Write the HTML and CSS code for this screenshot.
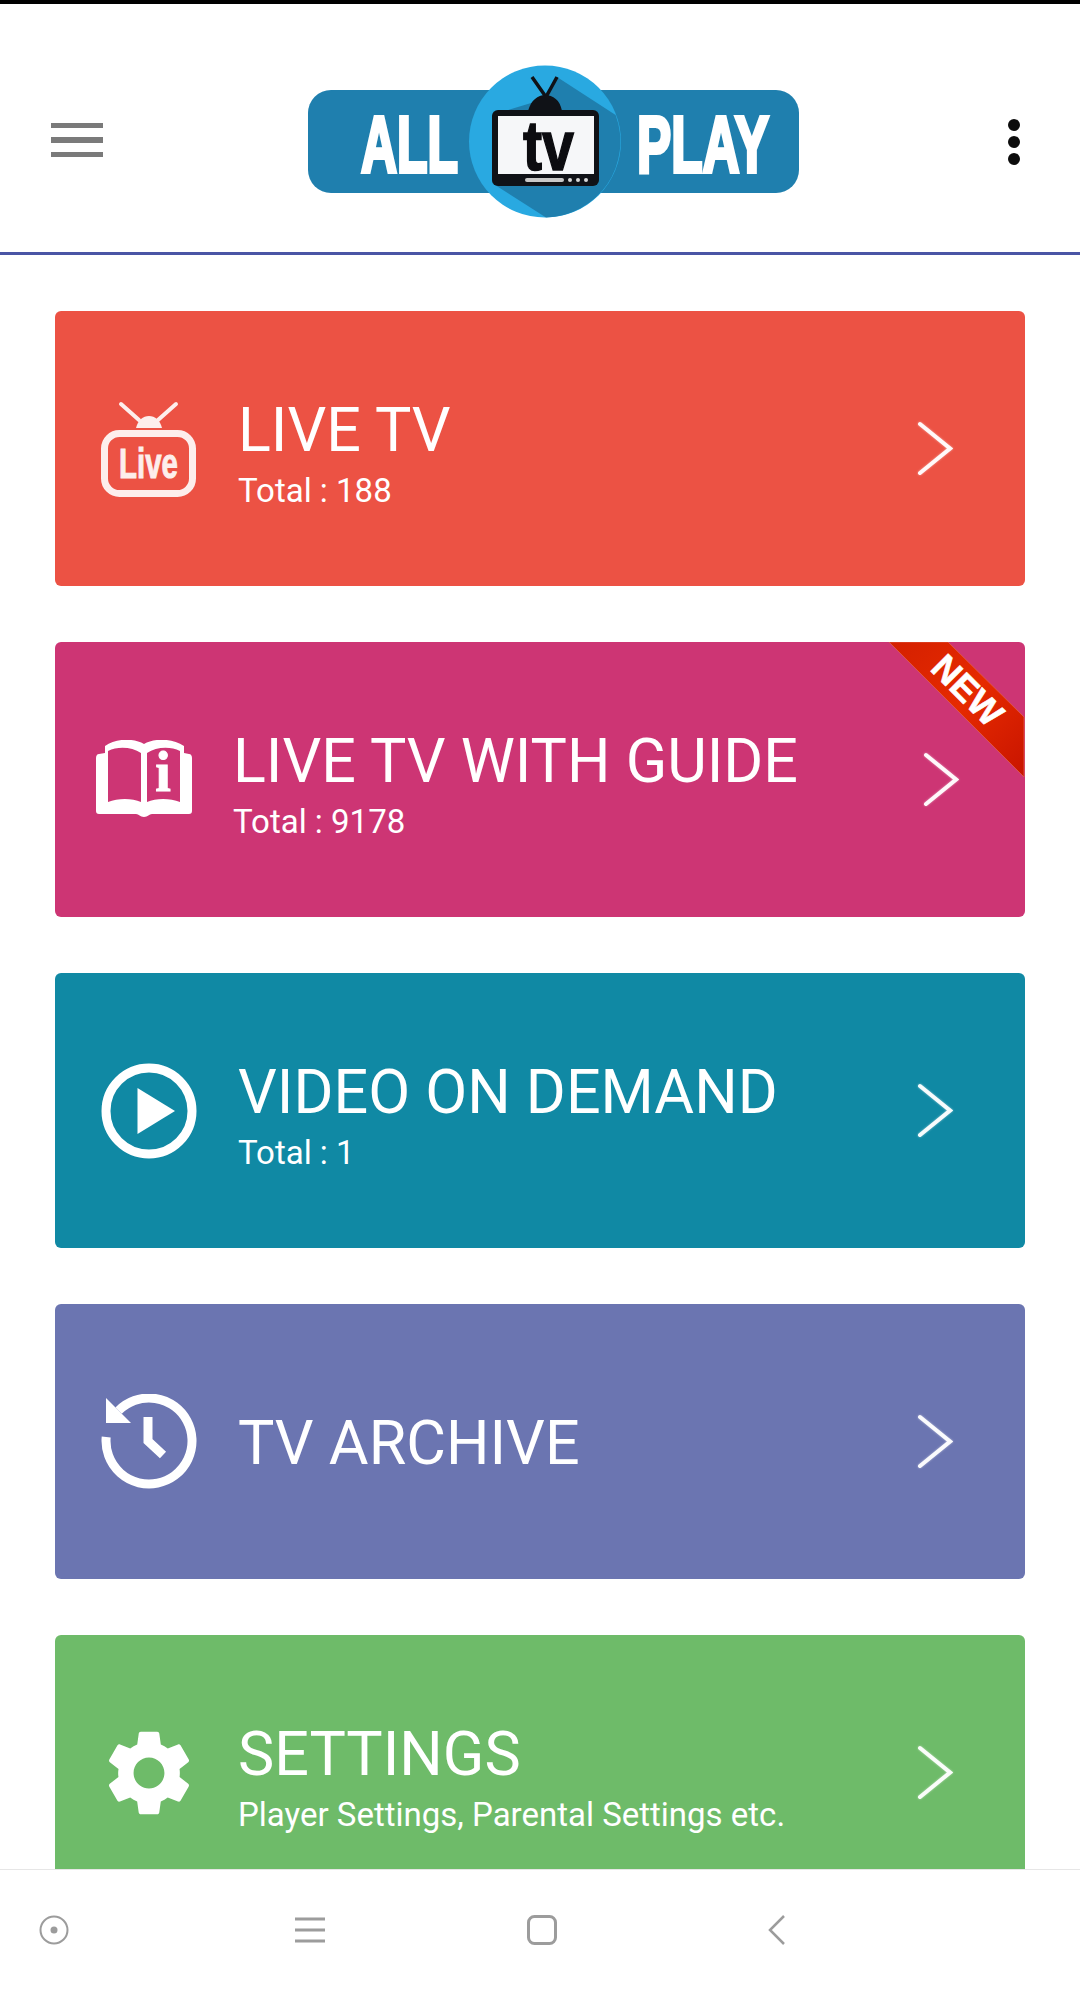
FILE: index.html
```html
<!DOCTYPE html>
<html lang="en">
<head>
  <meta charset="UTF-8" />
  <meta name="viewport" content="width=device-width, initial-scale=1.0" />
  <title>All TV Play</title>
  <link rel="stylesheet" href="styles.css">
</head>
<body>
  <div class="screen">
    <header class="topbar">
      <div class="burger"><span></span><span></span><span></span></div>

      <svg class="logo" viewBox="300 60 510 180">
        <rect x="307" y="90" width="491" height="103" rx="23" fill="#1f7fae"/>
        <circle cx="544" cy="141.500" r="76" fill="#29a9e1"/>
        <path d="M556 77 L614.600 115 A76 76 0 0 1 545 217.500 L491 183 L491 115 L540 100 Z" fill="#1f7fae"/>
        <text class="logo-word" x="360" y="172" textLength="97" lengthAdjust="spacingAndGlyphs">ALL</text>
        <text class="logo-word" x="636" y="172" textLength="132" lengthAdjust="spacingAndGlyphs">PLAY</text>
        <path d="M531 77 L545 97 L556 77" fill="none" stroke="#101217" stroke-width="3.500"/>
        <path d="M527 111 C530 100 537 95 544 95 C552 95 559 100 561 111 Z" fill="#101217"/>
        <rect x="491" y="110" width="107" height="76" rx="6" fill="#101217"/>
        <rect x="497" y="116" width="96" height="58" fill="#f6f7f9"/>
        <text class="logo-tv" transform="translate(522 170) scale(0.82 1)">tv</text>
        <rect x="524" y="178" width="39" height="4" rx="2" fill="#c9c9c9"/>
        <circle cx="569" cy="180" r="2" fill="#d8d8d8"/>
        <circle cx="577" cy="180" r="2" fill="#d8d8d8"/>
        <circle cx="585" cy="180" r="2" fill="#d8d8d8"/>
      </svg>

      <div class="dots"><span></span><span></span><span></span></div>
    </header>

    <main class="menu">
      <a class="card card-red">
        <svg class="card-icon" viewBox="0 0 96 96">
          <path d="M20 3 L38 19 M75 3 L57 19" stroke="#fdeeec" stroke-width="4" stroke-linecap="round"/>
          <path d="M35 27 C37 19 42 15 48 15 C54 15 59 19 61 27 Z" fill="#fdeeec"/>
          <rect x="3.500" y="32.500" width="88" height="60" rx="15" fill="none" stroke="#fdeeec" stroke-width="7"/>
          <text class="live-word" transform="translate(18 77) scale(0.7 1)">Live</text>
        </svg>
        <div class="card-text">
          <h2>LIVE TV</h2>
          <p>Total : 188</p>
        </div>
        <svg class="chevron" viewBox="0 0 36 56"><path d="M3 3 L33 27.500 L3 52"/></svg>
      </a>

      <a class="card card-pink">
        <svg class="card-icon" viewBox="0 0 96 78">
          <path fill-rule="evenodd" fill="#fff" d="M3 14 L9 13 L9 6 C20 -2 38 -2 48 4 C58 -2 76 -2 88 6 L88 13 L93 14 C95 14 96 16 96 18 L96 71 C96 73 95 74 93 74 L56 74 C53 74 52 77 48 77 C44 77 43 74 40 74 L3 74 C1 74 0 73 0 71 L0 18 C0 16 1 14 3 14 Z M12 11 L12 62 C22 58 36 58 45 62 L45 13 C36 7 22 6 12 11 Z M51 13 L51 62 C60 58 74 58 84 62 L84 11 C74 6 60 7 51 13 Z"/>
          <text class="book-i" x="67" y="51">i</text>
        </svg>
        <div class="card-text">
          <h2>LIVE TV WITH GUIDE</h2>
          <p>Total : 9178</p>
        </div>
        <svg class="chevron" viewBox="0 0 36 56"><path d="M3 3 L33 27.500 L3 52"/></svg>
        <svg class="ribbon" viewBox="0 0 136 136">
          <defs>
            <linearGradient id="ribbonRed" x1="0" y1="0" x2="1" y2="1">
              <stop offset="0" stop-color="#d42000"/>
              <stop offset="0.5" stop-color="#e62a00"/>
              <stop offset="1" stop-color="#c81400"/>
            </linearGradient>
          </defs>
          <path d="M0 0 L59 0 L135 75 L135 135 Z" fill="url(#ribbonRed)" stroke="#e0604a" stroke-width="0.800"/>
          <text class="ribbon-word" transform="translate(79 48) rotate(45)" text-anchor="middle" y="13">NEW</text>
        </svg>
      </a>

      <a class="card card-teal">
        <svg class="card-icon" viewBox="0 0 96 96">
          <circle cx="48" cy="48" r="43" fill="none" stroke="#fff" stroke-width="9"/>
          <path d="M36.500 25 L74 48 L36.500 71 Z" fill="#fff"/>
        </svg>
        <div class="card-text">
          <h2>VIDEO ON DEMAND</h2>
          <p>Total : 1</p>
        </div>
        <svg class="chevron" viewBox="0 0 36 56"><path d="M3 3 L33 27.500 L3 52"/></svg>
      </a>

      <a class="card card-indigo">
        <svg class="card-icon" viewBox="0 0 96 96">
          <path d="M5.200 43 A43 43 0 1 0 17.600 16.600" fill="none" stroke="#fff" stroke-width="9"/>
          <path d="M5 4 L5 29 L30 29 Z" fill="#fff"/>
          <path d="M47 23 L47 47 L62 61" fill="none" stroke="#fff" stroke-width="9"/>
        </svg>
        <div class="card-text">
          <h2>TV ARCHIVE</h2>
        </div>
        <svg class="chevron" viewBox="0 0 36 56"><path d="M3 3 L33 27.500 L3 52"/></svg>
      </a>

      <a class="card card-green">
        <svg class="card-icon" viewBox="0.800 0.800 22.400 22.400">
          <path fill="#fff" d="M19.140 12.940c.04-.3.06-.61.06-.94 0-.32-.02-.64-.07-.94l2.030-1.580c.18-.14.23-.41.12-.61l-1.920-3.320c-.12-.22-.37-.29-.59-.22l-2.390.96c-.5-.38-1.030-.7-1.620-.94l-.36-2.540c-.04-.24-.24-.41-.48-.41h-3.840c-.24 0-.43.17-.47.41l-.36 2.540c-.59.24-1.130.57-1.620.94l-2.390-.96c-.22-.08-.47 0-.59.22L2.740 8.870c-.12.21-.08.47.12.61l2.030 1.580c-.05.3-.09.63-.09.94s.02.64.07.94l-2.030 1.580c-.18.14-.23.41-.12.61l1.920 3.320c.12.22.37.29.59.22l2.390-.96c.5.38 1.030.7 1.620.94l.36 2.540c.05.24.24.41.48.41h3.840c.24 0 .44-.17.47-.41l.36-2.540c.59-.24 1.130-.56 1.620-.94l2.390.96c.22.08.47 0 .59-.22l1.920-3.320c.12-.22.07-.47-.12-.61l-2.010-1.580zM12 15.600c-1.980 0-3.600-1.620-3.600-3.600s1.620-3.600 3.600-3.600 3.600 1.620 3.600 3.600-1.620 3.600-3.600 3.600z"/>
        </svg>
        <div class="card-text">
          <h2>SETTINGS</h2>
          <p>Player Settings, Parental Settings etc.</p>
        </div>
        <svg class="chevron" viewBox="0 0 36 56"><path d="M3 3 L33 27.500 L3 52"/></svg>
      </a>
    </main>

    <footer class="softkeys">
      <svg viewBox="0 0 30 30"><circle cx="15" cy="15" r="13.500" fill="none" stroke="#9c9c9c" stroke-width="2"/><circle cx="15" cy="15" r="3.500" fill="#9c9c9c"/></svg>
      <svg viewBox="0 0 30 30"><path d="M0 4 H30 M0 15 H30 M0 26 H30" stroke="#9c9c9c" stroke-width="3"/></svg>
      <svg viewBox="0 0 30 30"><rect x="1.500" y="1.500" width="27" height="27" rx="6" fill="none" stroke="#9c9c9c" stroke-width="3"/></svg>
      <svg viewBox="0 0 30 30"><path d="M16 1 L2 15 L16 29" fill="none" stroke="#9c9c9c" stroke-width="2.500"/></svg>
    </footer>
  </div>
</body>
</html>
```

FILE: styles.css
```css
body { margin: 0; background: #fff; font-family: Roboto, Arial, sans-serif; }
.screen { height: 1989px; display: flex; flex-direction: column; overflow: hidden; border-top: 4px solid #000; box-sizing: border-box; }

.topbar { height: 204px; flex: none; display: flex; align-items: center; justify-content: space-between; padding: 44px 60px 0 51px; border-bottom: 3px solid #4a55a5; }
.burger { width: 52px; display: flex; flex-direction: column; gap: 9px; margin-bottom: 20px; }
.burger span { height: 5.500px; background: #7a7a7a; }
.logo { width: 510px; height: 180px; }
.logo-word { font-family: "Liberation Sans", sans-serif; font-weight: bold; font-size: 80px; fill: #fff; stroke: #fff; stroke-width: 4px; }
.logo-tv { font-family: "Liberation Sans", sans-serif; font-weight: bold; font-size: 70px; fill: #0c0c10; stroke: #0c0c10; stroke-width: 1.500px; }
.dots { width: 12px; display: flex; flex-direction: column; gap: 4.700px; margin-bottom: 16px; }
.dots span { width: 12px; height: 12px; border-radius: 50%; background: #0c0c0c; }

.menu { flex: 1; overflow: hidden; padding: 56px 55px 0; display: flex; flex-direction: column; gap: 56px; min-height: 0; }
.card { flex: none; position: relative; height: 275px; border-radius: 6px; display: flex; align-items: center; padding: 0 72px 0 46px; color: #fff; overflow: hidden; }
.card-red { background: #ec5244; }
.card-pink { background: #cd3574; padding: 0 66px 0 41px; }
.card-teal { background: #1089a4; }
.card-indigo { background: #6b75b1; }
.card-green { background: #6ebb69; }
.card-icon { width: 96px; height: 96px; flex: none; }
.card-pink .card-icon { height: 78px; margin-top: -2px; }
.card-text { flex: 1; margin-left: 41px; margin-top: 2px; }
.card-text h2 { margin: 0; font-weight: 400; font-size: 61px; line-height: 72px; }
.card-text p { margin: 2px 0 -8px; font-size: 33px; line-height: 46px; }
.chevron { width: 36px; height: 56px; flex: none; filter: drop-shadow(0 0 1px rgba(255, 255, 255, 0.5)); }
.chevron path { fill: none; stroke: #fff; stroke-width: 4; stroke-linecap: round; stroke-opacity: 0.95; }
.ribbon { position: absolute; top: 0; right: 0; width: 136px; height: 136px; }
.ribbon-word { font-family: "Liberation Sans", sans-serif; font-weight: bold; font-size: 36px; fill: #fff; stroke: #fff; stroke-width: 0.600px; }
.live-word { font-family: "Liberation Sans", sans-serif; font-weight: bold; font-size: 42px; fill: #fdeeec; stroke: #fdeeec; stroke-width: 1px; }
.book-i { font-family: "Liberation Serif", serif; font-weight: bold; font-size: 56px; fill: #fff; stroke: #fff; stroke-width: 1px; text-anchor: middle; }

.softkeys { height: 119px; flex: none; border-top: 1px solid #e6e6e6; background: #fff; display: grid; grid-template-columns: 256px 232px 241px 1fr; align-items: center; padding-left: 39px; }
.softkeys svg { width: 30px; height: 30px; }
```
